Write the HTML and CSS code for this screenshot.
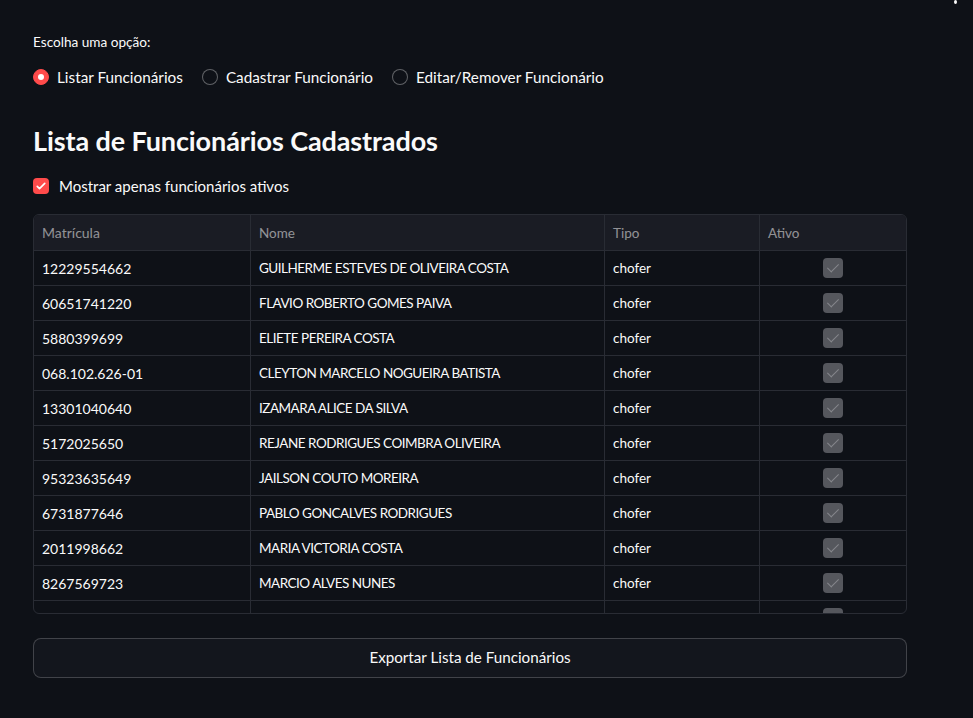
FILE: index.html
```html
<!DOCTYPE html>
<html lang="pt">
<head>
<meta charset="utf-8">
<link rel="stylesheet" href="styles.css">
</head>
<body>
<div class="menu-dot"></div>
<main class="app">
  <div class="label">Escolha uma opção:</div>
  <div class="radios">
    <label class="radio"><span class="circle on"></span>Listar Funcionários</label>
    <label class="radio"><span class="circle"></span>Cadastrar Funcionário</label>
    <label class="radio"><span class="circle"></span>Editar/Remover Funcionário</label>
  </div>
  <h2 class="title">Lista de Funcionários Cadastrados</h2>
  <label class="check">
    <span class="box">
      <svg viewBox="0 0 16 16" width="12" height="12"><path d="M3 8.5l3 3 7-7" fill="none" stroke="#fff" stroke-width="2.2" stroke-linecap="round" stroke-linejoin="round"/></svg>
    </span>
    Mostrar apenas funcionários ativos
  </label>
  <div class="table">
    <div class="thead row">
      <div class="c c1">Matrícula</div>
      <div class="c c2">Nome</div>
      <div class="c c3">Tipo</div>
      <div class="c c4">Ativo</div>
    </div>
    <div class="tbody">
      <div class="row"><div class="c c1">12229554662</div><div class="c c2">GUILHERME ESTEVES DE OLIVEIRA COSTA</div><div class="c c3">chofer</div><div class="c c4 ck"><span class="mini"></span></div></div>
      <div class="row"><div class="c c1">60651741220</div><div class="c c2">FLAVIO ROBERTO GOMES PAIVA</div><div class="c c3">chofer</div><div class="c c4 ck"><span class="mini"></span></div></div>
      <div class="row"><div class="c c1">5880399699</div><div class="c c2">ELIETE PEREIRA COSTA</div><div class="c c3">chofer</div><div class="c c4 ck"><span class="mini"></span></div></div>
      <div class="row"><div class="c c1">068.102.626-01</div><div class="c c2">CLEYTON MARCELO NOGUEIRA BATISTA</div><div class="c c3">chofer</div><div class="c c4 ck"><span class="mini"></span></div></div>
      <div class="row"><div class="c c1">13301040640</div><div class="c c2">IZAMARA ALICE DA SILVA</div><div class="c c3">chofer</div><div class="c c4 ck"><span class="mini"></span></div></div>
      <div class="row"><div class="c c1">5172025650</div><div class="c c2">REJANE RODRIGUES COIMBRA OLIVEIRA</div><div class="c c3">chofer</div><div class="c c4 ck"><span class="mini"></span></div></div>
      <div class="row"><div class="c c1">95323635649</div><div class="c c2">JAILSON COUTO MOREIRA</div><div class="c c3">chofer</div><div class="c c4 ck"><span class="mini"></span></div></div>
      <div class="row"><div class="c c1">6731877646</div><div class="c c2">PABLO GONCALVES RODRIGUES</div><div class="c c3">chofer</div><div class="c c4 ck"><span class="mini"></span></div></div>
      <div class="row"><div class="c c1">2011998662</div><div class="c c2">MARIA VICTORIA COSTA</div><div class="c c3">chofer</div><div class="c c4 ck"><span class="mini"></span></div></div>
      <div class="row"><div class="c c1">8267569723</div><div class="c c2">MARCIO ALVES NUNES</div><div class="c c3">chofer</div><div class="c c4 ck"><span class="mini"></span></div></div>
      <div class="row"><div class="c c1">31504417600</div><div class="c c2">JOSE CARLOS DA SILVA</div><div class="c c3">chofer</div><div class="c c4 ck"><span class="mini"></span></div></div>
    </div>
  </div>
  <button class="btn">Exportar Lista de Funcionários</button>
</main>
</body>
</html>
```
FILE: styles.css
```css
* { box-sizing: border-box; }
html, body { margin: 0; padding: 0; }
body {
  background: #0e1117;
  color: #fafafa;
  font-family: "Source Sans Pro", Lato, "Noto Sans", sans-serif;
  width: 973px;
  height: 718px;
  overflow: hidden;
  position: relative;
}
.menu-dot {
  position: absolute;
  left: 954px;
  top: 0;
  width: 3px;
  height: 4px;
  border-radius: 50%;
  background: #fafafa;
}
.app {
  padding: 33px 66px 0 33px;
  display: flex;
  flex-direction: column;
}
.label {
  font-size: 13.6px;
  line-height: 18px;
  height: 18px;
}
.radios {
  display: flex;
  gap: 19px;
  margin-top: 16px;
  height: 20px;
  align-items: center;
}
.radio {
  display: flex;
  align-items: center;
  gap: 8px;
  font-size: 15.3px;
}
.circle {
  width: 16px;
  height: 16px;
  border-radius: 50%;
  border: 1px solid rgba(250,250,250,0.35);
  background: #0e1117;
  position: relative;
}
.circle.on {
  background: #ff4b4b;
  border-color: #ff4b4b;
}
.circle.on::after {
  content: "";
  position: absolute;
  left: 4px;
  top: 4px;
  width: 6px;
  height: 6px;
  border-radius: 50%;
  background: #fff;
}
.title {
  font-size: 27px;
  font-weight: 700;
  margin: 38px 0 0;
  line-height: 32px;
  letter-spacing: -0.1px;
}
.check {
  display: flex;
  align-items: center;
  gap: 10px;
  font-size: 15px;
  margin-top: 19px;
  height: 20px;
}
.box {
  width: 16px;
  height: 16px;
  border-radius: 4px;
  background: #ff4b4b;
  display: flex;
  align-items: center;
  justify-content: center;
}
.table {
  margin-top: 18px;
  border: 1px solid #292c34;
  border-radius: 6px;
  height: 400px;
  overflow: hidden;
  font-size: 13.5px;
}
.row {
  display: grid;
  grid-template-columns: 217px 354px 155px 1fr;
  height: 35px;
  border-bottom: 1px solid #292c34;
}
.thead {
  height: 36px;
  background: #1a1c24;
  color: rgba(250,250,250,0.55);
}
.c {
  display: flex;
  align-items: center;
  padding: 0 8px;
  border-right: 1px solid #292c34;
  white-space: nowrap;
}
.c1 { font-size: 14px; }
.tbody .c2 { letter-spacing: -0.5px; }
.c4 { border-right: none; }
.ck { justify-content: center; padding: 0; }
.mini {
  width: 20px;
  height: 20px;
  border-radius: 4px;
  background: #55575d;
  display: block;
  position: relative;
}
.mini::after {
  content: "";
  position: absolute;
  left: 7px;
  top: 3px;
  width: 5px;
  height: 10px;
  border-right: 1.5px solid #85878c;
  border-bottom: 1.5px solid #85878c;
  transform: rotate(45deg);
}
.btn {
  margin-top: 24px;
  height: 40px;
  padding: 0 0 2px;
  border: 1px solid rgba(250,250,250,0.2);
  border-radius: 8px;
  background: #13161d;
  color: #fafafa;
  font-family: inherit;
  font-size: 15.2px;
}
```
